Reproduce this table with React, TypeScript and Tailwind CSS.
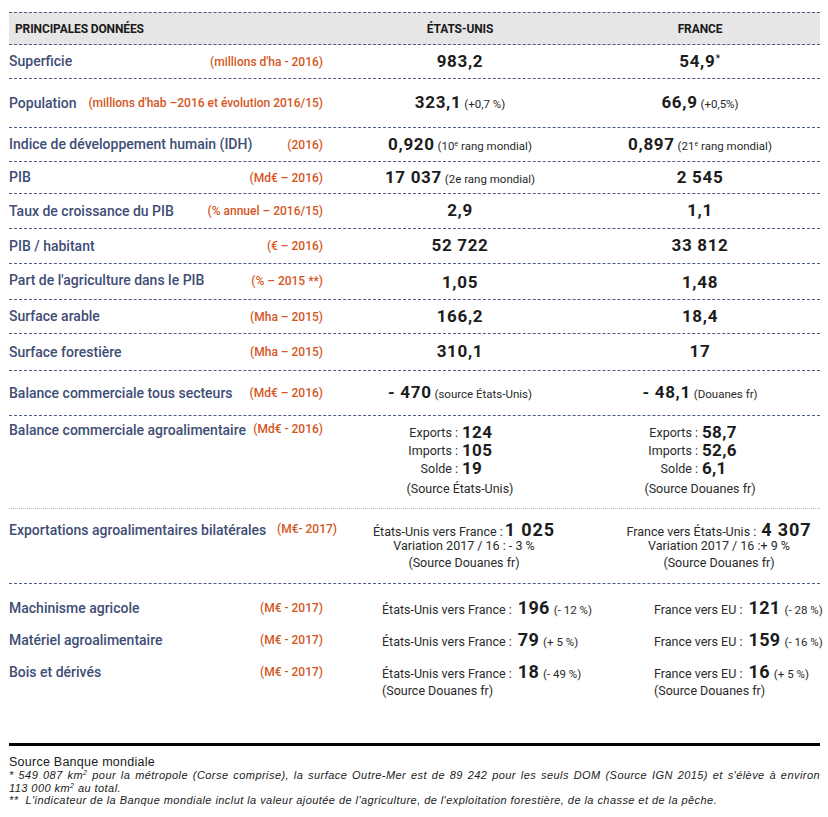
import React from 'react';

const LBL = 'text-[14px] font-medium text-[#414d75] whitespace-nowrap';
const UNIT = 'text-[12px] font-medium text-[#d4561e] whitespace-nowrap';
const VAL = 'text-[17px] font-bold text-[#1c1c1c] tracking-[0.04em]';
const SMALL = 'text-[11.5px] text-[#2a2a2a]';
const TXT = 'text-[12.5px] text-[#2a2a2a]';
const LINE = 'border-b border-dashed border-[#4a5a8a]';

type RowProps = {
  className: string;
  label: string;
  unit: string;
  us: React.ReactNode;
  fr: React.ReactNode;
};

const Row: React.FC<RowProps> = ({ className, label, unit, us, fr }) => (
  <div className={`grid grid-cols-[331px_240px_240px] items-center ${LINE} ${className}`}>
    <div className="flex justify-between items-center pr-[17px]">
      <span className={LBL}>{label}</span>
      <span className={UNIT}>{unit}</span>
    </div>
    <div className="text-center whitespace-nowrap">{us}</div>
    <div className="text-center whitespace-nowrap">{fr}</div>
  </div>
);

const Big: React.FC<{ v: string; s?: React.ReactNode }> = ({ v, s }) => (
  <span>
    <span className={VAL}>{v}</span>
    {s && <span className={SMALL}> {s}</span>}
  </span>
);

const Sup: React.FC<{ c: string }> = ({ c }) => (
  <span className="relative -top-[4px] text-[7px] leading-none">{c}</span>
);

const Trade: React.FC<{ text: string; v: string; pct: string; source?: boolean }> = ({ text, v, pct, source }) => (
  <div className="flex flex-col">
    <div className="flex items-baseline whitespace-nowrap h-[20px] leading-[20px]">
      <span className={TXT}>{text}</span>
      <span className="text-[18px] leading-[20px] font-bold text-[#1c1c1c] ml-[6px] tracking-[0.02em]">{v}</span>
      <span className={`${SMALL} ml-[4px]`}>{pct}</span>
    </div>
    {source && <span className={`${TXT} leading-[18px]`}>(Source Douanes fr)</span>}
  </div>
);

export default function App() {
  return (
    <div className="w-[828px] h-[817px] bg-white font-['Roboto',sans-serif] pt-[12px] pl-[9px]">
      <div className="w-[811px]">
        {/* header */}
        <div className="grid grid-cols-[331px_240px_240px] items-center h-[33px] bg-[#e6e6e6] border-y border-dashed border-[#4a5a8a]">
          <span className="pl-[6px] text-[12px] font-bold text-[#1a1a1a] tracking-[-0.01em]">PRINCIPALES DONNÉES</span>
          <span className="text-center text-[12px] font-bold text-[#1a1a1a] tracking-[-0.01em]">ÉTATS-UNIS</span>
          <span className="text-center text-[12px] font-bold text-[#1a1a1a] tracking-[-0.01em]">FRANCE</span>
        </div>

        <Row className="h-[34px]" label="Superficie" unit="(millions d'ha - 2016)" us={<Big v="983,2" />} fr={<span className={VAL}>54,9<span className="relative -top-[5px] text-[11px] font-normal">*</span></span>} />
        <Row className="h-[49px]" label="Population" unit="(millions d'hab –2016 et évolution 2016/15)" us={<Big v="323,1" s="(+0,7 %)" />} fr={<Big v="66,9" s="(+0,5%)" />} />
        <Row
          className="h-[34px]"
          label="Indice de développement humain (IDH)"
          unit="(2016)"
          us={<Big v="0,920" s={<>(10<Sup c="e" /> rang mondial)</>} />}
          fr={<Big v="0,897" s={<>(21<Sup c="e" /> rang mondial)</>} />}
        />
        <Row className="h-[32px]" label="PIB" unit="(Md€ – 2016)" us={<Big v="17 037" s="(2e rang mondial)" />} fr={<Big v="2 545" />} />
        <Row className="h-[35px]" label="Taux de croissance du PIB" unit="(% annuel – 2016/15)" us={<Big v="2,9" />} fr={<Big v="1,1" />} />
        <Row className="h-[35px]" label="PIB / habitant" unit="(€ – 2016)" us={<Big v="52 722" />} fr={<Big v="33 812" />} />
        <Row className="h-[36px] !items-start pt-[6px]" label="Part de l'agriculture dans le PIB" unit="(% – 2015 **)" us={<Big v="1,05" />} fr={<Big v="1,48" />} />
        <Row className="h-[34px]" label="Surface arable" unit="(Mha – 2015)" us={<Big v="166,2" />} fr={<Big v="18,4" />} />
        <Row className="h-[37px]" label="Surface forestière" unit="(Mha – 2015)" us={<Big v="310,1" />} fr={<Big v="17" />} />
        <Row className="h-[45px]" label="Balance commerciale tous secteurs" unit="(Md€ – 2016)" us={<Big v="- 470" s="(source États-Unis)" />} fr={<Big v="- 48,1" s="(Douanes fr)" />} />

        {/* balance agro */}
        <div className="grid grid-cols-[331px_240px_240px] h-[93px] border-b border-dotted border-[#b5b5b5]">
          <div className="flex justify-between pr-[17px] pt-[4px] h-[20px]">
            <span className={LBL}>Balance commerciale agroalimentaire</span>
            <span className={UNIT}>(Md€ - 2016)</span>
          </div>
          {[
            { v: ['124', '105', '19'], src: '(Source États-Unis)' },
            { v: ['58,7', '52,6', '6,1'], src: '(Source Douanes fr)' },
          ].map((c, i) => (
            <div key={i} className="flex flex-col items-center pt-[7px]">
              <div className="grid grid-cols-[1fr_1fr] auto-rows-[18px] gap-x-[4px]">
                {['Exports :', 'Imports :', 'Solde :'].map((l, j) => (
                  <React.Fragment key={l}>
                    <span className={`${TXT} text-right leading-[18px] translate-y-[1px]`}>{l}</span>
                    <span className="text-[17px] font-bold text-[#1c1c1c] leading-[18px] tracking-[0.02em]">{c.v[j]}</span>
                  </React.Fragment>
                ))}
              </div>
              <span className={`${TXT} mt-[3px]`}>{c.src}</span>
            </div>
          ))}
        </div>

        {/* exportations */}
        <div className={`grid grid-cols-[331px_240px_240px] h-[75px] ${LINE}`}>
          <div className="flex justify-between pr-[3px] pt-[11px] h-[20px]">
            <span className={LBL}>Exportations agroalimentaires bilatérales</span>
            <span className={UNIT}>(M€- 2017)</span>
          </div>
          <div className="flex flex-col items-center pt-[7px] pl-[8px]">
            <div className="flex items-baseline h-[21px]">
              <span className={TXT}>États-Unis vers France :</span>
              <span className="text-[18px] font-bold text-[#1c1c1c] tracking-[0.05em] ml-[2px]">1 025</span>
            </div>
            <span className={`${TXT} h-[17px]`}>Variation 2017 / 16 : - 3 %</span>
            <span className={TXT}>(Source Douanes fr)</span>
          </div>
          <div className="flex flex-col items-center pt-[7px] pl-[38px]">
            <div className="flex items-baseline h-[21px]">
              <span className={TXT}>France vers États-Unis :</span>
              <span className="text-[18px] font-bold text-[#1c1c1c] tracking-[0.05em] ml-[5px]">4 307</span>
            </div>
            <span className={`${TXT} h-[17px]`}>Variation 2017 / 16 :+ 9 %</span>
            <span className={TXT}>(Source Douanes fr)</span>
          </div>
        </div>

        {/* trade detail rows */}
        <div className="h-[159px] flex flex-col gap-[12px] pt-[14px]">
          {[
            { label: 'Machinisme agricole', us: ['196', '(- 12 %)'], fr: ['121', '(- 28 %)'], src: false },
            { label: 'Matériel agroalimentaire', us: ['79', '(+ 5 %)'], fr: ['159', '(- 16 %)'], src: false },
            { label: 'Bois et dérivés', us: ['18', '(- 49 %)'], fr: ['16', '(+ 5 %)'], src: true },
          ].map((r) => (
            <div key={r.label} className="grid grid-cols-[331px_240px_240px] items-start">
              <div className="flex justify-between pr-[17px] h-[20px] items-center">
                <span className={LBL}>{r.label}</span>
                <span className={UNIT}>(M€ - 2017)</span>
              </div>
              <div className="pl-[42px]">
                <Trade text="États-Unis vers France :" v={r.us[0]} pct={r.us[1]} source={r.src} />
              </div>
              <div className="pl-[74px]">
                <Trade text="France vers EU :" v={r.fr[0]} pct={r.fr[1]} source={r.src} />
              </div>
            </div>
          ))}
        </div>

        {/* footer */}
        <div className="border-t-[3px] border-black pt-[9px] font-['Liberation_Sans',Arial,sans-serif] text-[#1a1a1a]">
          <p className="text-[12.5px] leading-[14px] tracking-[0.02em]">Source Banque mondiale</p>
          <p className="italic text-[11px] leading-[12.5px] tracking-[0.04em] text-justify [text-align-last:justify]">
            * 549 087 km<Sup c="2" /> pour la métropole (Corse comprise), la surface Outre-Mer est de 89 242 pour les seuls DOM (Source IGN 2015) et s'élève à environ
          </p>
          <p className="italic text-[11px] leading-[12.5px] tracking-[0.04em]">
            113 000 km<Sup c="2" /> au total.
          </p>
          <p className="italic text-[11px] leading-[12.5px] tracking-[0.04em]">
            ** &nbsp;L'indicateur de la Banque mondiale inclut la valeur ajoutée de l'agriculture, de l'exploitation forestière, de la chasse et de la pêche.
          </p>
        </div>
      </div>
    </div>
  );
}
